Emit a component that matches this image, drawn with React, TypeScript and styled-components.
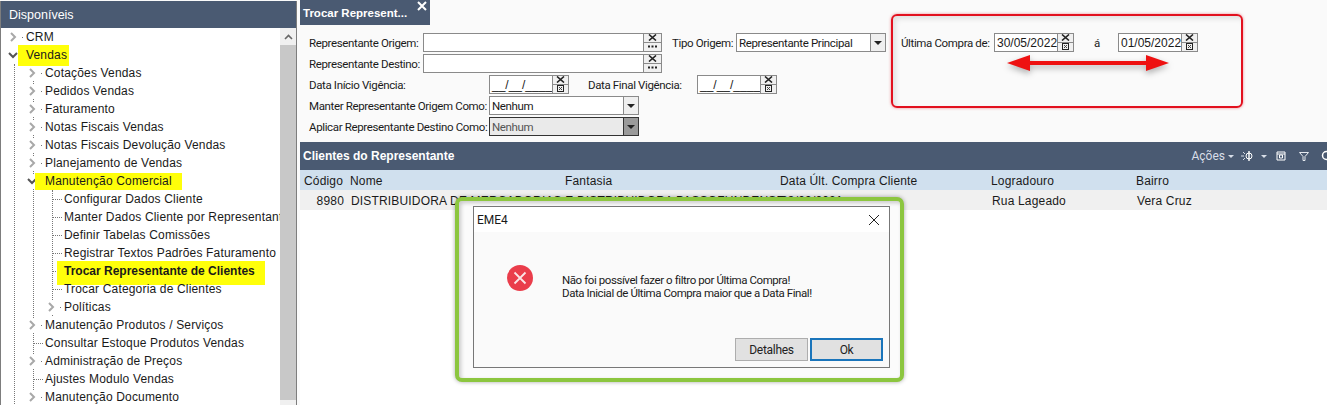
import React from 'react'
import styled, { createGlobalStyle } from 'styled-components'

const GlobalStyle = createGlobalStyle`
  html, body { margin: 0; padding: 0; background: #fafafa; }
  body { width: 1327px; height: 405px; overflow: hidden; font-family: "Liberation Sans", Arial, sans-serif; color: #1a1a1a; }
`

const formFont = `"Roboto", "Liberation Sans", sans-serif`
const dark = '#4a5a72'

const Page = styled.div`
  position: relative;
  display: flex;
  gap: 3px;
  width: 1327px;
  height: 405px;
  overflow: hidden;
`

/* ---- left tree ---- */
const Sidebar = styled.aside`
  flex: 0 0 297px;
  width: 297px;
  min-width: 0;
  overflow: hidden;
  box-sizing: border-box;
  margin-top: 1px;
  padding-left: 1px;
  border-left: 1px solid #7d7d7d;
  border-right: 1px solid #7d7d7d;
  background: #fff;
  display: flex;
  flex-direction: column;
`
const SideHeader = styled.div`
  height: 26px;
  flex-shrink: 0;
  margin-left: -1px;
  padding: 1px 0 0 8px;
  display: flex;
  align-items: center;
  background: ${dark};
  color: #fff;
  font-size: 12.5px;
`
const SideBody = styled.div`
  flex: 1;
  display: flex;
  min-width: 0;
  min-height: 0;
`
const Tree = styled.div`
  flex: 1;
  min-width: 0;
  overflow: hidden;
  padding: 0 0 0 13px;
`
const Scrollbar = styled.div`
  flex: 0 0 16px;
  display: flex;
  flex-direction: column;
  background: #f0f0f0;
`
const ScrollUp = styled.div`
  height: 17px;
  display: flex;
  align-items: center;
  justify-content: center;
`
const ScrollThumb = styled.div`
  height: 355px;
  background: #c8c8c8;
`
const Group = styled.div<{ $ml: number; $pl?: number }>`
  margin-left: ${p => p.$ml}px;
  padding-left: ${p => p.$pl ?? 0}px;
  border-left: 1px dotted #777;
`
const Row = styled.div`
  height: 18px;
  display: flex;
  align-items: center;
  white-space: nowrap;
  font-size: 12px;
  letter-spacing: 0.17px;
`
const Twist = styled.span`
  flex: 0 0 14px;
  height: 14px;
  margin-left: -9px;
  margin-right: 2px;
  display: flex;
  align-items: center;
  justify-content: center;
  background: #fff;
`
const TwistDot = styled.span`
  flex: 0 0 1px;
  height: 1px;
  margin-right: 3px;
  background: #777;
`
const Leaf = styled.span`
  flex: 0 0 9px;
  margin-right: 2px;
  border-top: 1px dotted #777;
`
const Label = styled.span<{ $mark?: 'a' | 'b' | 'c'; $bold?: boolean }>`
  position: relative;
  z-index: 0;
  font-weight: ${p => (p.$bold ? 700 : 400)};
  ${p => p.$bold && 'letter-spacing: 0;'}
  ${p => p.$mark && `
    &::before {
      content: '';
      position: absolute;
      z-index: -1;
      background: #ffff0a;
      ${p.$mark === 'a' ? 'left: -8px; right: -2px; top: -3px; bottom: -4px;' : ''}
      ${p.$mark === 'b' ? 'left: -10px; right: -10px; top: -1px; bottom: -2px;' : ''}
      ${p.$mark === 'c' ? 'left: -7px; right: -10px; top: -3px; bottom: -7px;' : ''}
    }
  `}
`

const Chevron = ({ open }: { open?: boolean }) => (
  <svg width="10" height="10" viewBox="0 0 10 10">
    <path d={open ? 'M1 3l4 4 4-4' : 'M3 1l4 4-4 4'} fill="none" stroke={open ? '#555' : '#a8a8a8'} strokeWidth="2" />
  </svg>
)

const Branch = ({ children, open, mark }: { children: string; open?: boolean; mark?: 'a' | 'b' | 'c' }) => (
  <Row>
    <Twist>
      <Chevron open={open} />
    </Twist>
    <TwistDot />
    <Label $mark={mark}>{children}</Label>
  </Row>
)

const Item = ({ children, mark, bold }: { children: string; mark?: 'a' | 'b' | 'c'; bold?: boolean }) => (
  <Row>
    <Leaf />
    <Label $mark={mark} $bold={bold}>{children}</Label>
  </Row>
)

/* ---- right side ---- */
const Main = styled.main`
  flex: 1;
  min-width: 0;
  display: flex;
  flex-direction: column;
  background: #fff;
`
const TabStrip = styled.div`
  height: 25px;
  background: #fafafa;
  display: flex;
`
const Tab = styled.div`
  width: 130px;
  box-sizing: border-box;
  padding-left: 3px;
  display: flex;
  align-items: center;
  justify-content: space-between;
  background: ${dark};
  color: #fff;
  font-size: 11.5px;
  font-weight: 700;
`
const TabClose = styled.span`
  align-self: flex-start;
  margin: 1px 3px 0 0;
`
const Form = styled.div`
  height: 117px;
  box-sizing: border-box;
  padding: 8px 0 0 9px;
  background: #fafafa;
  font-family: ${formFont};
  font-size: 11.5px;
  letter-spacing: -0.36px;
  display: flex;
  flex-direction: column;
  gap: 2px;
`
const FormRow = styled.div`
  height: 19px;
  display: flex;
  align-items: center;
  white-space: nowrap;
`
const FieldLabel = styled.span<{ $w?: number; $ml?: number }>`
  flex: 0 0 ${p => (p.$w ? `${p.$w}px` : 'auto')};
  margin-left: ${p => p.$ml ?? 0}px;
`
const Field = styled.div<{ $w: number; $grey?: boolean; $dark?: boolean }>`
  width: ${p => p.$w}px;
  height: 19px;
  box-sizing: border-box;
  display: flex;
  align-items: center;
  justify-content: space-between;
  border: 1px solid ${p => (p.$dark ? '#333' : '#8a8a8a')};
  background: ${p => (p.$grey ? '#eaeaea' : '#fff')};
  color: ${p => (p.$grey ? '#555' : '#1a1a1a')};
  padding-left: 2px;
  flex-shrink: 0;
`
const DropBtn = styled.span<{ $dark?: boolean }>`
  width: 14px;
  align-self: stretch;
  border-left: 1px solid ${p => (p.$dark ? '#333' : '#8a8a8a')};
  background: ${p => (p.$dark ? '#9a9a9a' : '#efefef')};
  display: flex;
  align-items: center;
  justify-content: center;
`
const Caret = styled.span<{ $color?: string; $size?: number }>`
  width: 0;
  height: 0;
  border-left: ${p => p.$size ?? 4}px solid transparent;
  border-right: ${p => p.$size ?? 4}px solid transparent;
  border-top: ${p => p.$size ?? 4}px solid ${p => p.$color ?? '#222'};
`
const Side = styled.div<{ $w: number }>`
  width: ${p => p.$w}px;
  height: 19px;
  box-sizing: border-box;
  flex-shrink: 0;
  margin-left: -1px;
  border: 1px solid #8a8a8a;
  background: #f0f0f0;
  display: grid;
  grid-template-rows: 1fr 1fr;
`
const SideCell = styled.span`
  display: flex;
  align-items: center;
  justify-content: center;
  &:first-child { border-bottom: 1px solid #8a8a8a; }
`
const DateBox = styled(Field)`
  font-family: "Liberation Sans", Arial, sans-serif;
  font-size: 12px;
  letter-spacing: 0;
`

const ClearIcon = () => (
  <svg width="9" height="7" viewBox="0 0 9 7">
    <path d="M1 .5l7 6M8 .5l-7 6" stroke="#222" strokeWidth="1.6" />
  </svg>
)
const CalIcon = () => (
  <svg width="7" height="7" viewBox="0 0 7 7">
    <rect x=".5" y=".5" width="6" height="6" fill="none" stroke="#222" />
    <path d="M2 2l3 3M5 2l-3 3" stroke="#444" />
  </svg>
)
const DotsIcon = () => (
  <svg width="9" height="3" viewBox="0 0 9 3">
    <path d="M0 .5h2v2H0zM3.500 .5h2v2h-2zM7 .5h2v2H7z" fill="#222" />
  </svg>
)

const LookupField = ({ w }: { w: number }) => (
  <>
    <Field $w={w} />
    <Side $w={19}>
      <SideCell><ClearIcon /></SideCell>
      <SideCell><DotsIcon /></SideCell>
    </Side>
  </>
)

const DateField = ({ value }: { value: string }) => (
  <>
    <DateBox $w={64}>{value}</DateBox>
    <Side $w={17}>
      <SideCell><ClearIcon /></SideCell>
      <SideCell><CalIcon /></SideCell>
    </Side>
  </>
)

const Select = ({ value, w, disabled }: { value: string; w: number; disabled?: boolean }) => (
  <Field $w={w} $grey={disabled} $dark={disabled}>
    {value}
    <DropBtn $dark={disabled}><Caret /></DropBtn>
  </Field>
)

const SectionBar = styled.div`
  height: 28px;
  flex-shrink: 0;
  box-sizing: border-box;
  padding-left: 3px;
  display: flex;
  align-items: center;
  justify-content: space-between;
  background: ${dark};
  color: #fff;
  font-size: 12px;
  font-weight: 700;
  overflow: hidden;
`
const Toolbar = styled.div`
  display: flex;
  align-items: center;
  margin-right: -6px;
  font-family: ${formFont};
  font-weight: 400;
  font-size: 12px;
  color: #d8dee8;
`
const ToolGap = styled.span<{ $w: number }>`
  width: ${p => p.$w}px;
`
const gridCols = '46px 215px 215px 211px 145px 1fr'
const HeadRow = styled.div`
  height: 20px;
  flex-shrink: 0;
  box-sizing: border-box;
  padding: 1px 0 0 4px;
  display: grid;
  grid-template-columns: ${gridCols};
  align-items: center;
  background: #d0e0ee;
  font-size: 12px;
  letter-spacing: 0.17px;
`
const DataRow = styled(HeadRow)`
  background: #f0f0f0;
`
const Code = styled.span`
  text-align: right;
  padding-right: 6px;
`
const Wide = styled.span`
  grid-column: span 2;
  white-space: nowrap;
  padding-left: 1px;
`
const Cell = styled.span`
  padding-left: 1px;
  white-space: nowrap;
`
const Empty = styled.div`
  flex: 1;
  background: #fff;
`

/* ---- hand drawn annotations and the dialog, they lie over the page ---- */
const RedBox = styled.div`
  position: absolute;
  left: 891px;
  top: 14px;
  width: 348px;
  height: 90px;
  border: 2px solid #e2101e;
  border-radius: 6px;
  box-shadow: 0 0 3px rgba(226, 16, 30, 0.5), inset 3px 3px 5px rgba(0, 0, 0, 0.1);
`
const ArrowMark = styled.svg`
  position: absolute;
  left: 1005px;
  top: 52px;
  filter: drop-shadow(0 3px 3px rgba(0, 0, 0, 0.3));
`
const GreenFrame = styled.div`
  position: absolute;
  left: 455px;
  top: 197px;
  width: 449px;
  height: 185px;
  box-sizing: border-box;
  padding: 5px 0 0 14px;
  border: 4px solid #8cc63f;
  border-radius: 7px;
  background: #fbfbfb;
  box-shadow: 0 0 4px rgba(0, 0, 0, 0.35), inset 2px 2px 4px rgba(0, 0, 0, 0.2);
`
const Dialog = styled.div`
  width: 417px;
  height: 162px;
  box-sizing: border-box;
  border: 1px solid #777;
  background: #fafafa;
  display: flex;
  flex-direction: column;
  font-family: ${formFont};
`
const DialogTitle = styled.div`
  height: 25px;
  flex-shrink: 0;
  padding: 0 9px 0 3px;
  display: flex;
  align-items: center;
  justify-content: space-between;
  background: #fff;
  font-size: 12px;
`
const DialogBody = styled.div`
  flex: 1;
  padding: 33px 0 0 33px;
  display: flex;
  align-items: flex-start;
  gap: 29px;
`
const DialogText = styled.p`
  margin: 9px 0 0;
  font-size: 11.5px;
  letter-spacing: -0.42px;
  line-height: 13px;
  white-space: nowrap;
`
const DialogFoot = styled.div`
  display: flex;
  justify-content: flex-end;
  gap: 2px;
  padding: 0 6px 6px 0;
`
const DialogButton = styled.button<{ $primary?: boolean }>`
  width: 73px;
  height: 23px;
  padding: 0;
  box-sizing: border-box;
  border: ${p => (p.$primary ? '2px solid #1a75bb' : '1px solid #adadad')};
  background: #e1e1e1;
  color: #222;
  font-family: ${formFont};
  font-size: 12px;
  letter-spacing: -0.3px;
`

const App = () => (
  <Page>
    <GlobalStyle />
    <Sidebar>
      <SideHeader>Disponíveis</SideHeader>
      <SideBody>
        <Tree>
          <Branch>CRM</Branch>
          <Branch open mark="a">Vendas</Branch>
          <Group $ml={-1} $pl={18}>
            <Group $ml={0}>
              <Branch>Cotações Vendas</Branch>
              <Branch>Pedidos Vendas</Branch>
              <Branch>Faturamento</Branch>
              <Branch>Notas Fiscais Vendas</Branch>
              <Branch>Notas Fiscais Devolução Vendas</Branch>
              <Branch>Planejamento de Vendas</Branch>
              <Branch open mark="b">Manutenção Comercial</Branch>
              <Group $ml={18}>
                <Item>Configurar Dados Cliente</Item>
                <Item>Manter Dados Cliente por Representante</Item>
                <Item>Definir Tabelas Comissões</Item>
                <Item>Registrar Textos Padrões Faturamento</Item>
                <Item mark="c" bold>Trocar Representante de Clientes</Item>
                <Item>Trocar Categoria de Clientes</Item>
                <Branch>Políticas</Branch>
              </Group>
              <Branch>Manutenção Produtos / Serviços</Branch>
              <Item>Consultar Estoque Produtos Vendas</Item>
              <Branch>Administração de Preços</Branch>
              <Item>Ajustes Modulo Vendas</Item>
              <Branch>Manutenção Documento</Branch>
            </Group>
          </Group>
        </Tree>
        <Scrollbar>
          <ScrollUp>
            <svg width="9" height="6" viewBox="0 0 9 6">
              <path d="M1 5l3.500-3.500L8 5" fill="none" stroke="#666" strokeWidth="1.6" />
            </svg>
          </ScrollUp>
          <ScrollThumb />
        </Scrollbar>
      </SideBody>
    </Sidebar>

    <Main>
      <TabStrip>
        <Tab>
          Trocar Represent...
          <TabClose>
            <svg width="10" height="10" viewBox="0 0 10 10">
              <path d="M1 1l8 8M9 1l-8 8" stroke="#fff" strokeWidth="2" />
            </svg>
          </TabClose>
        </Tab>
      </TabStrip>
      <Form>
        <FormRow>
          <FieldLabel $w={114}>Representante Origem:</FieldLabel>
          <LookupField w={221} />
          <FieldLabel $ml={10} $w={64}>Tipo Origem:</FieldLabel>
          <Select value="Representante Principal" w={150} />
          <FieldLabel $ml={15} $w={93}>Última Compra de:</FieldLabel>
          <DateField value="30/05/2022" />
          <FieldLabel $ml={20} $w={24}>á</FieldLabel>
          <DateField value="01/05/2022" />
        </FormRow>
        <FormRow>
          <FieldLabel $w={114}>Representante Destino:</FieldLabel>
          <LookupField w={221} />
        </FormRow>
        <FormRow>
          <FieldLabel $w={180}>Data Início Vigência:</FieldLabel>
          <DateField value="__/__/____" />
          <FieldLabel $ml={19} $w={109}>Data Final Vigência:</FieldLabel>
          <DateField value="__/__/____" />
        </FormRow>
        <FormRow>
          <FieldLabel $w={180}>Manter Representante Origem Como:</FieldLabel>
          <Select value="Nenhum" w={150} />
        </FormRow>
        <FormRow>
          <FieldLabel $w={180}>Aplicar Representante Destino Como:</FieldLabel>
          <Select value="Nenhum" w={150} disabled />
        </FormRow>
      </Form>
      <SectionBar>
        Clientes do Representante
        <Toolbar>
          Ações
          <ToolGap $w={3} />
          <Caret $color="#d8dee8" $size={3} />
          <ToolGap $w={6} />
          <svg width="16" height="12" viewBox="0 0 16 12">
            <path d="M1 6h3M3 2l2 2M3 10l2-2" stroke="#d8dee8" fill="none" />
            <circle cx="9" cy="6" r="3" fill="none" stroke="#fff" />
            <path d="M9 1v10" stroke="#fff" strokeWidth="1.4" />
          </svg>
          <ToolGap $w={5} />
          <Caret $color="#d8dee8" $size={3} />
          <ToolGap $w={9} />
          <svg width="10" height="10" viewBox="0 0 10 10">
            <path d="M1 1h8v8H1zM3.500 4h3v3h-3zM1 3h8" fill="none" stroke="#fff" />
          </svg>
          <ToolGap $w={13} />
          <svg width="10" height="9" viewBox="0 0 10 9">
            <path d="M.5 .5h9L6 4.500V8.500H4V4.500z" fill="none" stroke="#e6eaf0" />
          </svg>
          <ToolGap $w={12} />
          <svg width="12" height="12" viewBox="0 0 12 12">
            <circle cx="5.500" cy="5.500" r="4" fill="none" stroke="#fff" strokeWidth="1.500" />
          </svg>
        </Toolbar>
      </SectionBar>
      <HeadRow>
        <span>Código</span>
        <span>Nome</span>
        <span>Fantasia</span>
        <span>Data Últ. Compra Cliente</span>
        <span>Logradouro</span>
        <span>Bairro</span>
      </HeadRow>
      <DataRow>
        <Code>8980</Code>
        <Wide>DISTRIBUIDORA DE MERCADORIAS E DISTRIBUIDORA PASSOFUNDENSE</Wide>
        <Cell>23/09/2021</Cell>
        <Cell>Rua Lageado</Cell>
        <Cell>Vera Cruz</Cell>
      </DataRow>
      <Empty />
    </Main>

    <RedBox />
    <ArrowMark width="166" height="22" viewBox="0 0 166 22">
      <path d="M2 11L25 3v6h116V3l23 8-23 8v-6H25v6z" fill="#ee1111" />
    </ArrowMark>

    <GreenFrame>
      <Dialog>
        <DialogTitle>
          EME4
          <svg width="12" height="12" viewBox="0 0 12 12">
            <path d="M1 1l10 10M11 1L1 11" stroke="#222" strokeWidth="1" />
          </svg>
        </DialogTitle>
        <DialogBody>
          <svg width="26" height="26" viewBox="0 0 26 26">
            <circle cx="13" cy="13" r="13" fill="#ea3d4b" />
            <path d="M7.500 7.500l11 11M18.500 7.500l-11 11" stroke="#fbe4e6" strokeWidth="1.8" />
          </svg>
          <DialogText>
            Não foi possível fazer o filtro por Última Compra!
            <br />
            Data Inicial de Última Compra maior que a Data Final!
          </DialogText>
        </DialogBody>
        <DialogFoot>
          <DialogButton>Detalhes</DialogButton>
          <DialogButton $primary>Ok</DialogButton>
        </DialogFoot>
      </Dialog>
    </GreenFrame>
  </Page>
)

export default App
